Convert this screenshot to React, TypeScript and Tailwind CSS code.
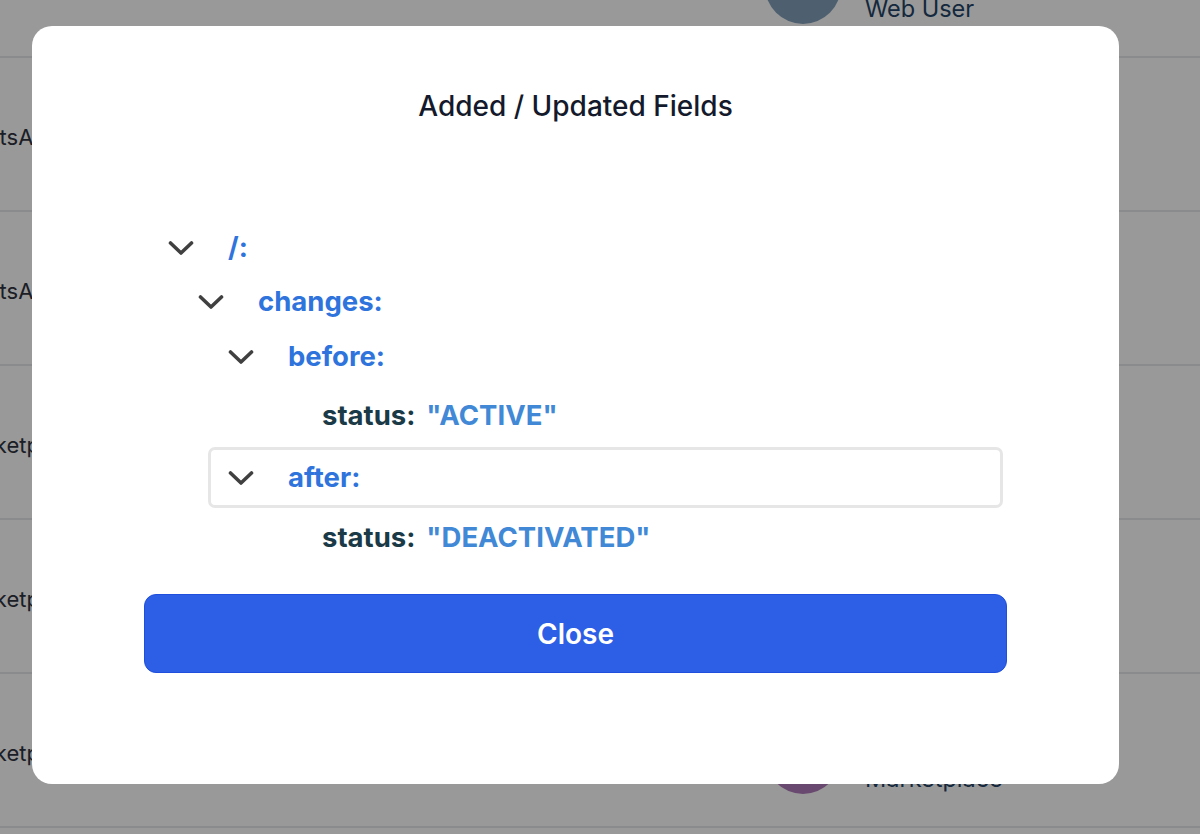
import React from "react";

type Node =
  | { kind: "branch"; label: string; depth: number; h: string; active?: boolean }
  | { kind: "leaf"; label: string; value: string; h: string };

const rows: Node[] = [
  { kind: "branch", label: "/:", depth: 0, h: "h-[54px]" },
  { kind: "branch", label: "changes:", depth: 1, h: "h-[54px]" },
  { kind: "branch", label: "before:", depth: 2, h: "h-[56px]" },
  { kind: "leaf", label: "status:", value: '"ACTIVE"', h: "h-[62px]" },
  { kind: "branch", label: "after:", depth: 2, h: "h-[61px]", active: true },
  { kind: "leaf", label: "status:", value: '"DEACTIVATED"', h: "h-[59px]" },
];

const pageRows = [
  { left: "ClientsApp", shift: "-ml-[53px] w-[695px]", name: "Jane Cooper", type: "Web User", avatar: "bg-[#82a0bb]" },
  { left: "ClientsApp", shift: "-ml-[53px] w-[695px]", name: "Acme Corp", type: "Web User", avatar: "bg-[#7fb3a4]" },
  { left: "ClientsApp", shift: "-ml-[53px] w-[695px]", name: "Acme Corp", type: "Web User", avatar: "bg-[#c9a46b]" },
  { left: "Marketplace", shift: "-ml-[46px] w-[688px]", name: "Shop Co", type: "Marketplace", avatar: "bg-[#8d9cc9]" },
  { left: "Marketplace", shift: "-ml-[46px] w-[688px]", name: "Shop Co", type: "Marketplace", avatar: "bg-[#c08a7a]" },
  { left: "Marketplace", shift: "-ml-[46px] w-[688px]", name: "Vendor", type: "Marketplace", avatar: "bg-[#b07bba]" },
];

const indent = ["pl-[20px]", "pl-[50px]", "pl-[80px]"];

function Chevron() {
  return (
    <svg width="26" height="16" viewBox="0 0 26 16" fill="none" className="shrink-0">
      <polyline
        points="2.5,3 13,13 23.5,3"
        stroke="#404040"
        strokeWidth="3.6"
        strokeLinecap="round"
        strokeLinejoin="round"
      />
    </svg>
  );
}

function TreeRow({ node }: { node: Node }) {
  if (node.kind === "leaf") {
    return (
      <div className={`flex items-center pl-[174px] ${node.h}`}>
        <span className="text-[#1b3a47]">{node.label}</span>
        <span className="ml-[11px] text-[#4189d6]">{node.value}</span>
      </div>
    );
  }
  const box = node.active
    ? "ml-[60px] pl-[17px] border-[3px] border-[#e6e6e6] rounded-[7px]"
    : indent[node.depth];
  return (
    <div className={`flex items-center ${node.h} ${box}`}>
      <Chevron />
      <span className="ml-[34px] text-[#2f74dd]">{node.label}</span>
    </div>
  );
}

export default function App() {
  return (
    <div className="relative h-[834px] w-[1200px] overflow-hidden bg-white font-['Inter','Liberation_Sans',sans-serif]">
      <div className="-mt-[96px] flex flex-col">
        {pageRows.map((r, i) => (
          <div key={i} className="flex h-[154px] items-center border-b-2 border-[#e7e8ea]">
            <span className={`${r.shift} mt-[6px] text-[22px] text-[#2f3340]`}>{r.left}</span>
            <div className="ml-[123px] mt-[12px] flex items-center">
              <div className={`h-[76px] w-[76px] rounded-full ${r.avatar}`} />
              <div className="ml-[24px] mt-[16px] flex flex-col text-[23.5px] leading-[30px] text-[#234466]">
                <span>{r.name}</span>
                <span>{r.type}</span>
              </div>
            </div>
          </div>
        ))}
      </div>

      <div className="fixed inset-0 bg-black/40 pl-[32px] pt-[26px]">
        <div className="flex h-[758px] w-[1087px] flex-col rounded-[20px] bg-white px-[112px] pt-[64px]">
          <h2 className="h-8 text-center text-[28px] font-medium leading-8 text-[#141a2c]">
            Added / Updated Fields
          </h2>
          <div className="mt-[99px] flex flex-col pl-[4px] pr-[4px] text-[27.5px] font-bold">
            {rows.map((n, i) => (
              <TreeRow key={i} node={n} />
            ))}
          </div>
          <button className="mt-[27px] h-[79px] w-full rounded-[12px] border border-[#1f4fdc] bg-[#2c5ee6] text-[28px] font-semibold text-white">
            Close
          </button>
        </div>
      </div>
    </div>
  );
}
